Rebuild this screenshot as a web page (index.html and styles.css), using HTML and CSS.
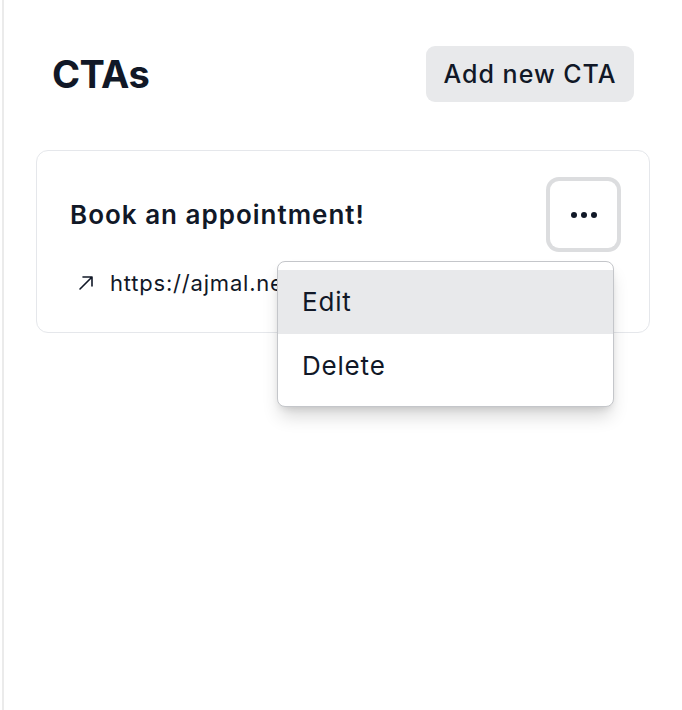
FILE: index.html
```html
<!DOCTYPE html>
<html lang="en">
<head>
<meta charset="utf-8">
<title>CTAs</title>
<link rel="stylesheet" href="styles.css">
</head>
<body>
<main class="panel">
  <header class="panel-header">
    <h1 class="panel-title">CTAs</h1>
    <button class="btn-add" type="button">Add new CTA</button>
  </header>
  <section class="card">
    <div class="card-head">
      <h2 class="card-title">Book an appointment!</h2>
      <button class="btn-more" type="button" aria-label="More">
        <svg width="26" height="6" viewBox="0 0 26 6" aria-hidden="true">
          <circle cx="3" cy="3" r="3" fill="#111827"/>
          <circle cx="13" cy="3" r="3" fill="#111827"/>
          <circle cx="23" cy="3" r="3" fill="#111827"/>
        </svg>
      </button>
    </div>
    <a class="card-link" href="#">
      <svg class="link-icon" width="20" height="20" viewBox="0 0 20 20" aria-hidden="true">
        <path d="M4 16 L16 4 M7 4 H16 V13" fill="none" stroke="#111827" stroke-width="1.6" stroke-linecap="round" stroke-linejoin="round"/>
      </svg>
      <span>https://ajmal.net/book</span>
    </a>
    <div class="menu" role="menu">
      <div class="menu-item is-active" role="menuitem">Edit</div>
      <div class="menu-item" role="menuitem">Delete</div>
    </div>
  </section>
</main>
</body>
</html>
```
FILE: styles.css
```css
* { box-sizing: border-box; }
html, body { margin: 0; padding: 0; background: #ffffff; }
body {
  font-family: Inter, "Noto Sans", "Liberation Sans", sans-serif;
  color: #111827;
}
.panel {
  margin-left: 2px;
  border-left: 2px solid #ebebeb;
  height: 710px;
  padding: 46px 32px 0 32px;
}
.panel-header {
  display: flex;
  align-items: center;
  justify-content: space-between;
  padding: 0 16px;
  height: 56px;
}
.panel-title {
  margin: 0;
  font-size: 38px;
  font-weight: 700;
  letter-spacing: -0.5px;
  line-height: 56px;
}
.btn-add {
  font-family: inherit;
  background: #e8e9eb;
  color: #111827;
  border: none;
  border-radius: 9px;
  height: 56px;
  width: 208px;
  font-size: 25px;
  font-weight: 500;
  letter-spacing: 1px;
  padding: 0;
  cursor: pointer;
}
.card {
  position: relative;
  margin-top: 48px;
  border: 1px solid #e5e7eb;
  border-radius: 12px;
  padding: 30px 32px 32px 33px;
  height: 183px;
}
.card-head {
  display: flex;
  align-items: center;
  justify-content: space-between;
}
.card-title {
  margin: 0;
  font-size: 26px;
  font-weight: 600;
  letter-spacing: 1px;
  line-height: 32px;
}
.btn-more {
  width: 67px;
  height: 67px;
  border: none;
  border-radius: 9px;
  background: #fff;
  box-shadow: 0 0 0 4px #dcdddf;
  display: flex;
  align-items: center;
  justify-content: center;
  padding: 0;
}
.card-link {
  display: flex;
  align-items: center;
  gap: 14px;
  margin-top: 20px;
  margin-left: 6px;
  color: #111827;
  text-decoration: none;
  font-size: 22px;
  letter-spacing: 0.8px;
  line-height: 30px;
}
.menu {
  position: absolute;
  left: 240px;
  top: 110px;
  width: 337px;
  background: #fff;
  border: 1px solid #c4c6ca;
  border-radius: 8px;
  padding: 8px 0;
  box-shadow: 0 12px 18px -3px rgba(0,0,0,0.16), 0 4px 8px -4px rgba(0,0,0,0.16);
}
.menu-item {
  height: 64px;
  line-height: 64px;
  padding: 0 24px;
  font-size: 26px;
  letter-spacing: 0.8px;
  color: #111827;
}
.menu-item.is-active { background: #e8e9eb; }
```
